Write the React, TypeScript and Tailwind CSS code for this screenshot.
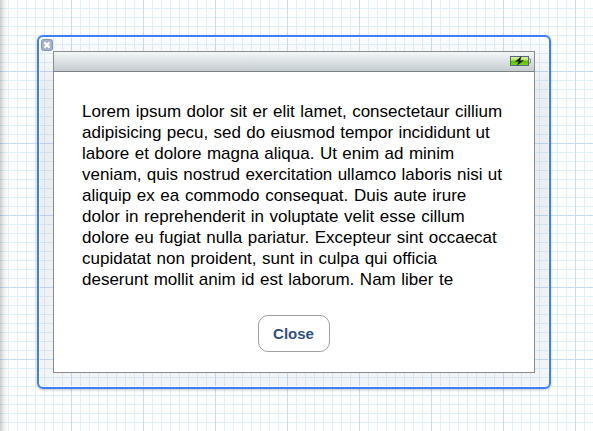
const lines = [
  { text: 'Lorem ipsum dolor sit er elit lamet, consectetaur cillium', spacing: '[word-spacing:0.8px]' },
  { text: 'adipisicing pecu, sed do eiusmod tempor incididunt ut', spacing: '[word-spacing:0.6px]' },
  { text: 'labore et dolore magna aliqua. Ut enim ad minim', spacing: '[word-spacing:0.7px]' },
  { text: 'veniam, quis nostrud exercitation ullamco laboris nisi ut', spacing: '[word-spacing:0.6px]' },
  { text: 'aliquip ex ea commodo consequat. Duis aute irure', spacing: '[word-spacing:0.9px]' },
  { text: 'dolor in reprehenderit in voluptate velit esse cillum', spacing: '[word-spacing:0.8px]' },
  { text: 'dolore eu fugiat nulla pariatur. Excepteur sint occaecat', spacing: '[word-spacing:0.8px]' },
  { text: 'cupidatat non proident, sunt in culpa qui officia', spacing: '[word-spacing:0.8px]' },
  { text: 'deserunt mollit anim id est laborum. Nam liber te', spacing: '[word-spacing:0.8px]' },
];

function Battery() {
  return (
    <svg width="22" height="12" viewBox="0 0 22 12">
      <defs>
        <linearGradient id="charge" x1="0" y1="0" x2="0" y2="1">
          <stop offset="0" stopColor="#e2f6bd" />
          <stop offset="0.42" stopColor="#a9e552" />
          <stop offset="0.5" stopColor="#5cbd00" />
          <stop offset="1" stopColor="#7bdb0c" />
        </linearGradient>
      </defs>
      <rect x="0.5" y="1.5" width="18" height="9" fill="url(#charge)" stroke="#59657c" />
      <path d="M19 4h1.5v4H19" fill="#dce2e8" stroke="#707b8c" strokeWidth="0.8" />
      <path d="M11.3 1.6L5.5 6.4h3.4L7.2 10.2l6.3-4.7H10z" fill="#071405" stroke="#071405" strokeWidth="0.3" />
    </svg>
  );
}

function CloseBadge() {
  return (
    <svg className="absolute left-[2px] top-[2px]" width="12" height="12" viewBox="0 0 12 12">
      <rect x="0.5" y="0.5" width="11" height="11" rx="2" fill="#a5b1c7" stroke="#8797b3" />
      <path d="M3.4 3.4l5.2 5.2M8.6 3.4L3.4 8.6" stroke="#fff" strokeWidth="2.2" />
    </svg>
  );
}

export default function App() {
  return (
    <main
      className="relative h-[431px] w-[593px] overflow-hidden bg-white pl-[37px] pt-[35px] font-['Liberation_Sans',Arial,sans-serif] [background-image:linear-gradient(90deg,#c9dcf7_1px,transparent_1px),linear-gradient(#c9dcf7_1px,transparent_1px),linear-gradient(90deg,#e0f1fe_1px,transparent_1px),linear-gradient(#e0f1fe_1px,transparent_1px)] [background-position:71px_71px,71px_71px,8px_8px,8px_8px] [background-size:72px_72px,72px_72px,9px_9px,9px_9px]"
    >
      <div className="absolute left-0 top-0 h-full w-[9px] bg-gradient-to-r from-black/20 via-black/5 to-transparent" />
      <div className="relative h-[354px] w-[514px] rounded-[6px] border-2 border-[#3b80f5] bg-[linear-gradient(rgba(90,110,140,0.02),rgba(90,110,140,0.12)_50px,rgba(90,110,140,0.12)_150px,rgba(90,100,120,0.07))] pl-[14px] pt-[14px] shadow-[0_1px_3px_rgba(0,0,0,0.25),inset_0_0_0_1px_rgba(255,255,255,0.75)]">
        <CloseBadge />
        <section className="flex h-[322px] w-[482px] flex-col border border-[#8c8c8c] bg-white">
          <header className="flex h-[20px] shrink-0 justify-end border-b border-[#7c8184] bg-gradient-to-b from-[#f3f7f8] to-[#c5cccf] pr-[2px] pt-[3px]">
            <Battery />
          </header>
          <div className="pl-[28px] pt-[29px] text-[17px] leading-[21px] text-black">
            {lines.map((line) => (
              <p key={line.text} className={`whitespace-nowrap ${line.spacing}`}>{line.text}</p>
            ))}
          </div>
          <button className="ml-[204px] mt-[25px] h-[37px] w-[72px] shrink-0 rounded-[10px] border border-[#a0a0a0] bg-white pr-px pt-[2px] text-[15px] font-bold text-[#314f86]">
            Close
          </button>
        </section>
      </div>
    </main>
  );
}
